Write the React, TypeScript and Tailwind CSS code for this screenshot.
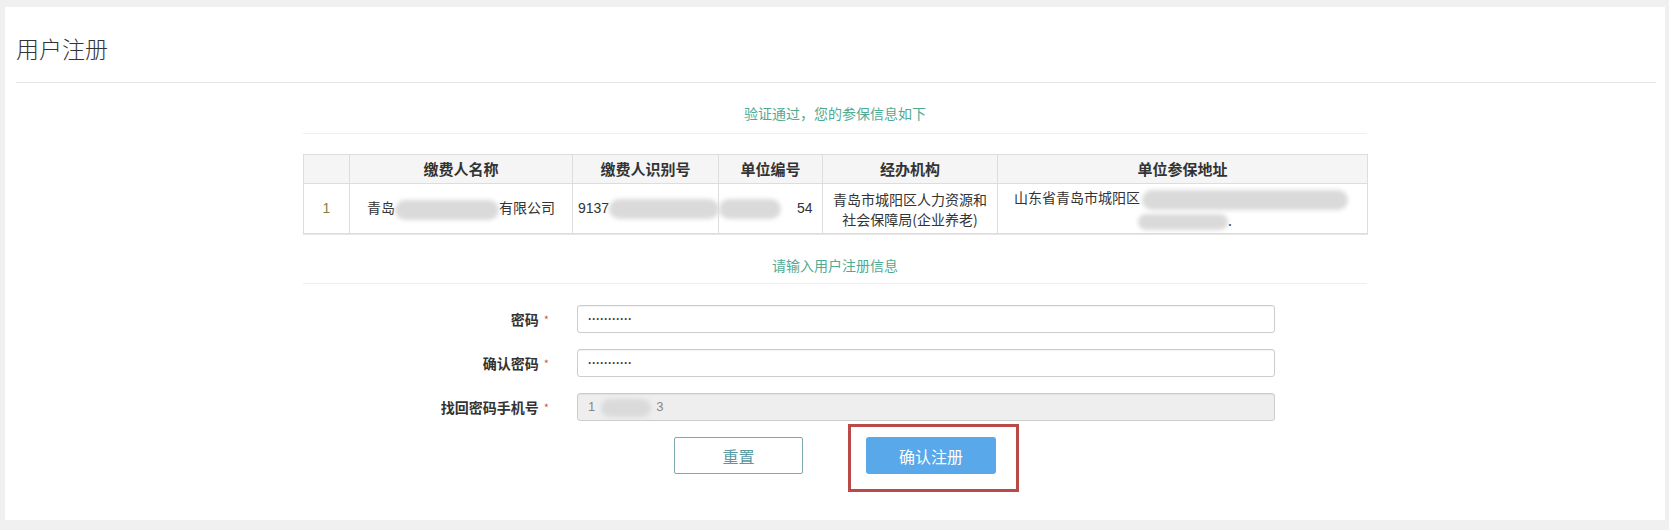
import React from "react";

const cn = '"Noto Sans CJK SC", "Liberation Sans", sans-serif';
const latin = '"Liberation Sans", "Noto Sans CJK SC", sans-serif';

function Blob({ className }: { className: string }) {
  return <span className={`inline-block align-middle rounded-full bg-[#dadada] blur-[2px] ${className}`} />;
}

function Field({ label, children, disabled }: { label: string; children: React.ReactNode; disabled?: boolean }) {
  return (
    <div className="flex items-center h-[28px]">
      <div className="w-[274px] pr-[28px] text-right text-[14px] font-bold text-[#333] leading-[28px]">
        {label}
        <span className="ml-[5px] text-[11px] font-normal text-[#c0605c] align-top">*</span>
      </div>
      <div
        className={`w-[698px] h-[28px] rounded-[3px] border border-[#cccccc] shadow-[inset_0_1px_1px_rgba(0,0,0,0.06)] pl-[10px] flex items-center ${
          disabled ? "bg-[#eeeeee]" : "bg-white"
        }`}
      >
        {children}
      </div>
    </div>
  );
}

const dots = "···········";

export default function App() {
  return (
    <div className="w-full h-[530px] bg-[#f0f0f0] pt-[7px] pl-[5px] pr-[4px]" style={{ fontFamily: cn }}>
      <div className="h-[513px] bg-white">
        <div className="ml-[11px] mr-[9px] pt-[26px] pb-[18px] border-b border-[#e5e5e5]">
          <h1 className="text-[23px] leading-[31px] font-light text-[#333]">用户注册</h1>
        </div>

        <div className="w-[1064px] mx-auto">
          <div className="mt-[20px] pb-[10px] border-b border-[#eeeeee] text-center text-[14px] leading-[20px] text-[#4fab93]">
            验证通过，您的参保信息如下
          </div>

          <table className="mt-[20px] w-[1064px] table-fixed border-collapse border border-[#dddddd] text-[14px] text-[#333] shadow-[0_1px_0_#e6e6e6]">
            <colgroup>
              <col className="w-[46px]" />
              <col className="w-[223px]" />
              <col className="w-[146px]" />
              <col className="w-[104px]" />
              <col className="w-[175px]" />
              <col className="w-[370px]" />
            </colgroup>
            <thead>
              <tr className="bg-[#f5f5f5] h-[29px]">
                <th className="border border-[#dddddd]"></th>
                <th className="border border-[#dddddd] text-[15px] font-bold">缴费人名称</th>
                <th className="border border-[#dddddd] text-[15px] font-bold">缴费人识别号</th>
                <th className="border border-[#dddddd] text-[15px] font-bold">单位编号</th>
                <th className="border border-[#dddddd] text-[15px] font-bold">经办机构</th>
                <th className="border border-[#dddddd] text-[15px] font-bold">单位参保地址</th>
              </tr>
            </thead>
            <tbody>
              <tr className="h-[50px]">
                <td className="border border-[#dddddd] text-center text-[#8a7d4a]" style={{ fontFamily: latin }}>
                  1
                </td>
                <td className="border border-[#dddddd] text-center whitespace-nowrap">
                  青岛<Blob className="w-[104px] h-[20px]" />有限公司
                </td>
                <td className="border border-[#dddddd] pl-[5px] whitespace-nowrap overflow-visible" style={{ fontFamily: latin }}>
                  9137<Blob className="w-[110px] h-[20px]" />
                </td>
                <td className="border border-[#dddddd] pr-[13px] text-right whitespace-nowrap" style={{ fontFamily: latin }}>
                  <Blob className="w-[62px] h-[20px] mr-[16px]" />54
                </td>
                <td className="border border-[#dddddd] text-center leading-[20px]">
                  青岛市城阳区人力资源和
                  <br />
                  社会保障局(企业养老)
                </td>
                <td className="border border-[#dddddd] pl-[16px] leading-[20px] whitespace-nowrap">
                  <div>
                    山东省青岛市城阳区<Blob className="w-[206px] h-[20px] ml-[2px]" />
                  </div>
                  <div className="pl-[124px]">
                    <Blob className="w-[90px] h-[16px]" />.
                  </div>
                </td>
              </tr>
            </tbody>
          </table>

          <div className="mt-[21px] pb-[8px] border-b border-[#eeeeee] text-center text-[14px] leading-[20px] text-[#4fab93]">
            请输入用户注册信息
          </div>

          <div className="mt-[21px] flex flex-col gap-[16px]">
            <Field label="密码">
              <span className="text-[12px] font-bold text-[#444]" style={{ fontFamily: latin }}>
                {dots}
              </span>
            </Field>
            <Field label="确认密码">
              <span className="text-[12px] font-bold text-[#444]" style={{ fontFamily: latin }}>
                {dots}
              </span>
            </Field>
            <Field label="找回密码手机号" disabled>
              <span className="text-[13px] text-[#888] whitespace-nowrap" style={{ fontFamily: latin }}>
                1<Blob className="w-[50px] h-[18px] ml-[6px] mr-[5px] bg-[#d4d4d4]" />3
              </span>
            </Field>
          </div>

          <div className="mt-[16px] flex justify-center gap-[63px]">
            <button className="w-[129px] h-[37px] rounded-[2px] border border-[#7aa9b1] bg-white text-[16px] text-[#5a9aa4]">
              重置
            </button>
            <div className="relative">
              <button className="w-[130px] h-[37px] rounded-[3px] bg-[#58a8ea] text-[16px] text-white">确认注册</button>
              <div className="absolute -left-[18px] -top-[13px] w-[171px] h-[68px] border-[3px] border-[#b94a48] pointer-events-none" />
            </div>
          </div>
        </div>
      </div>
    </div>
  );
}
